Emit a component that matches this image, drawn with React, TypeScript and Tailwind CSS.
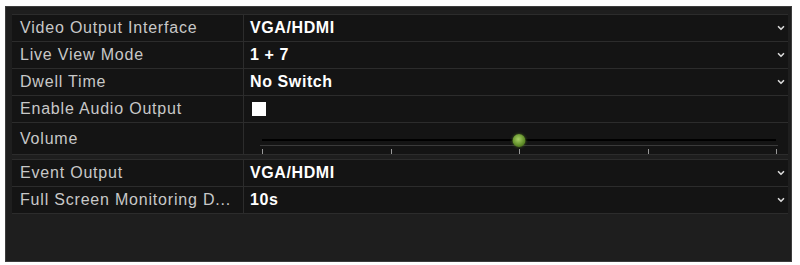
import { ChevronDown } from 'lucide-react';

type Row = { label: string; value?: string; kind: 'select' | 'check' | 'slider' };

const groupA: Row[] = [
  { label: 'Video Output Interface', value: 'VGA/HDMI', kind: 'select' },
  { label: 'Live View Mode', value: '1 + 7', kind: 'select' },
  { label: 'Dwell Time', value: 'No Switch', kind: 'select' },
  { label: 'Enable Audio Output', kind: 'check' },
  { label: 'Volume', kind: 'slider' },
];

const groupB: Row[] = [
  { label: 'Event Output', value: 'VGA/HDMI', kind: 'select' },
  { label: 'Full Screen Monitoring D...', value: '10s', kind: 'select' },
];

function Slider() {
  const ticks = [0, 25, 50, 75, 100];
  return (
    <div className="relative h-full w-full">
      <div className="absolute left-[12px] right-[10px] top-[16px] h-[2px] bg-black" />
      <div className="absolute left-[10px] right-[8px] top-[22px] h-[1px] bg-[#3a3a3a]" />
      {ticks.map((t) => (
        <div
          key={t}
          className="absolute top-[26px] h-[5px] w-[1px] bg-[#9a9a9a]"
          style={{ left: `calc(12px + (100% - 22px) * ${t / 100})` }}
        />
      ))}
      <div
        className="absolute top-[11px] h-[13px] w-[13px] -translate-x-1/2 rounded-full bg-[radial-gradient(circle_at_45%_40%,#a6d064,#5d8a26_60%,#3d5c18)] shadow-[0_0_3px_#4a6a20]"
        style={{ left: 'calc(12px + (100% - 22px) * 0.5)' }}
      />
    </div>
  );
}

function SettingRow({ row }: { row: Row }) {
  const tall = row.kind === 'slider';
  return (
    <div className={`flex ${tall ? 'h-[32px]' : 'h-[27px]'} border-b border-[#2c2c2c] bg-[#141414]`}>
      <div className="flex w-[232px] shrink-0 items-center overflow-hidden whitespace-nowrap border-r border-[#2c2c2c] pl-[8px] text-[16px] tracking-[0.8px] text-[#c8c8c8]">
        <span>{row.label}</span>
      </div>
      <div className="flex flex-1 items-center pl-[6px] pr-[2px]">
        {row.kind === 'select' && (
          <>
            <span className="flex-1 text-[16px] font-bold tracking-[0.6px] text-white">{row.value}</span>
            <ChevronDown size={10} strokeWidth={4} className="text-[#d8d8d8]" />
          </>
        )}
        {row.kind === 'check' && <div className="ml-[2px] h-[14px] w-[14px] bg-white" />}
        {row.kind === 'slider' && <Slider />}
      </div>
    </div>
  );
}

export default function App() {
  return (
    <div className="h-[265px] w-[800px] bg-white pl-[5px] pr-[8px] pt-[6px] pb-[3px]" style={{ fontFamily: '"Liberation Sans", Arial, sans-serif' }}>
      <div className="h-full border border-[#3c3c3c] bg-[#1e1e1e] pl-[6px] pr-[3px] pt-[7px]">
        <div className="flex flex-col border-t border-[#2c2c2c]">
          {groupA.map((r) => (
            <SettingRow key={r.label} row={r} />
          ))}
        </div>
        <div className="mt-[4px] flex flex-col border-t border-[#2c2c2c]">
          {groupB.map((r) => (
            <SettingRow key={r.label} row={r} />
          ))}
        </div>
      </div>
    </div>
  );
}
